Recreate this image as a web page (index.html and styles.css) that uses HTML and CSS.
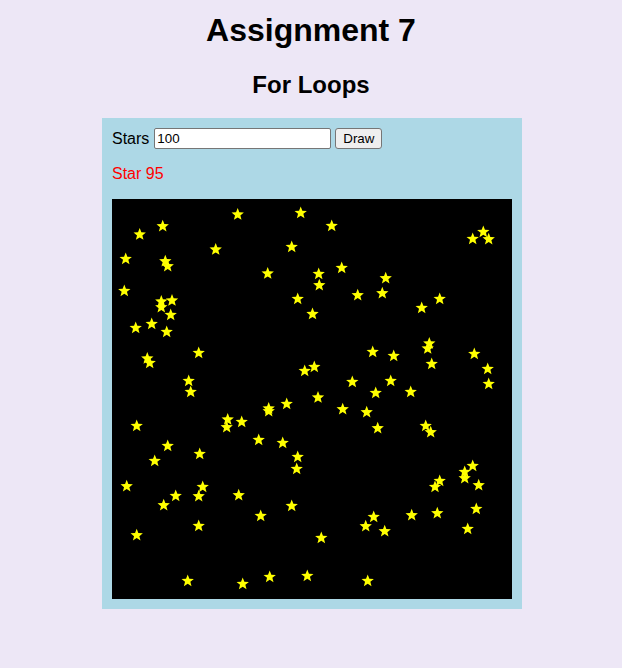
FILE: index.html
```html
<!DOCTYPE html>
<html lang="en">
<head>
<meta charset="utf-8">
<title>Assignment 7</title>
<link rel="stylesheet" href="styles.css">
</head>
<body>
<h1 class="title">Assignment 7</h1>
<h2 class="subtitle">For Loops</h2>
<main class="panel">
  <div class="controls">
    <label class="label" for="count">Stars</label>
    <input class="field" id="count" type="text" value="100">
    <button class="btn" type="button">Draw</button>
  </div>
  <p class="status">Star 95</p>
  <svg class="sky" width="400" height="400" viewBox="0 0 400 400" xmlns="http://www.w3.org/2000/svg">
    <defs>
      <polygon id="s" points="0,-6.5 1.65,-2.27 6.18,-2.01 2.66,0.87 3.82,5.26 0,2.8 -3.82,5.26 -2.66,0.87 -6.18,-2.01 -1.65,-2.27"/>
    </defs>
    <rect width="400" height="400" fill="#000"/>
    <g fill="#ffff00" transform="translate(0,0.6)">
      <use href="#s" x="125.7" y="15"/>
      <use href="#s" x="188.7" y="13.3"/>
      <use href="#s" x="50.7" y="26.7"/>
      <use href="#s" x="27.7" y="35"/>
      <use href="#s" x="219.7" y="26.3"/>
      <use href="#s" x="371.3" y="32.3"/>
      <use href="#s" x="360.7" y="39.3"/>
      <use href="#s" x="376.7" y="39.7"/>
      <use href="#s" x="103.7" y="50"/>
      <use href="#s" x="179.7" y="47.3"/>
      <use href="#s" x="13.7" y="59.3"/>
      <use href="#s" x="53.3" y="61.7"/>
      <use href="#s" x="55.7" y="66.7"/>
      <use href="#s" x="229.7" y="68.3"/>
      <use href="#s" x="155.7" y="74"/>
      <use href="#s" x="206.7" y="74.3"/>
      <use href="#s" x="273.7" y="78.7"/>
      <use href="#s" x="207.3" y="85.7"/>
      <use href="#s" x="12.3" y="91.3"/>
      <use href="#s" x="245.7" y="95.7"/>
      <use href="#s" x="270.3" y="93.7"/>
      <use href="#s" x="185.7" y="99.3"/>
      <use href="#s" x="49.3" y="102"/>
      <use href="#s" x="60" y="101"/>
      <use href="#s" x="49.3" y="107.7"/>
      <use href="#s" x="58.7" y="115.3"/>
      <use href="#s" x="327.7" y="99.3"/>
      <use href="#s" x="309.7" y="108.3"/>
      <use href="#s" x="200.5" y="114.5"/>
      <use href="#s" x="39.7" y="124.3"/>
      <use href="#s" x="23.7" y="128.3"/>
      <use href="#s" x="54.7" y="132.3"/>
      <use href="#s" x="317.3" y="144"/>
      <use href="#s" x="315.7" y="149"/>
      <use href="#s" x="260.7" y="152.3"/>
      <use href="#s" x="281.7" y="156.3"/>
      <use href="#s" x="362.3" y="154.3"/>
      <use href="#s" x="86.7" y="153.3"/>
      <use href="#s" x="35.3" y="159"/>
      <use href="#s" x="37.7" y="163.3"/>
      <use href="#s" x="319.7" y="164.3"/>
      <use href="#s" x="375.7" y="169.3"/>
      <use href="#s" x="202.3" y="167.3"/>
      <use href="#s" x="192.7" y="171.3"/>
      <use href="#s" x="240.3" y="182.3"/>
      <use href="#s" x="278.7" y="181.3"/>
      <use href="#s" x="76.7" y="181.3"/>
      <use href="#s" x="376.7" y="184.3"/>
      <use href="#s" x="78.7" y="192.3"/>
      <use href="#s" x="263.7" y="193.3"/>
      <use href="#s" x="298.7" y="192.3"/>
      <use href="#s" x="206" y="198"/>
      <use href="#s" x="174.7" y="204.3"/>
      <use href="#s" x="230.7" y="209.7"/>
      <use href="#s" x="254.7" y="212.7"/>
      <use href="#s" x="156.7" y="209"/>
      <use href="#s" x="156.7" y="211.7"/>
      <use href="#s" x="129.7" y="222.3"/>
      <use href="#s" x="115.7" y="220"/>
      <use href="#s" x="114.7" y="227.7"/>
      <use href="#s" x="24.7" y="226.3"/>
      <use href="#s" x="265.7" y="228.7"/>
      <use href="#s" x="313.7" y="226.3"/>
      <use href="#s" x="318.7" y="232.7"/>
      <use href="#s" x="146.7" y="240.3"/>
      <use href="#s" x="170.7" y="243.3"/>
      <use href="#s" x="55.7" y="246.3"/>
      <use href="#s" x="87.7" y="254.3"/>
      <use href="#s" x="185.7" y="257.3"/>
      <use href="#s" x="42.7" y="261.3"/>
      <use href="#s" x="184.7" y="269.3"/>
      <use href="#s" x="360.7" y="266.3"/>
      <use href="#s" x="352.7" y="272.3"/>
      <use href="#s" x="352.7" y="278.7"/>
      <use href="#s" x="327.7" y="281.3"/>
      <use href="#s" x="323" y="287.3"/>
      <use href="#s" x="366.7" y="285.7"/>
      <use href="#s" x="14.7" y="286.7"/>
      <use href="#s" x="90.7" y="287.3"/>
      <use href="#s" x="86.7" y="296.7"/>
      <use href="#s" x="63.7" y="296.3"/>
      <use href="#s" x="126.7" y="295.7"/>
      <use href="#s" x="51.7" y="305.7"/>
      <use href="#s" x="179.7" y="306.3"/>
      <use href="#s" x="364.3" y="309.3"/>
      <use href="#s" x="325.3" y="313.7"/>
      <use href="#s" x="299.7" y="315.7"/>
      <use href="#s" x="261.7" y="317.3"/>
      <use href="#s" x="148.7" y="316.3"/>
      <use href="#s" x="253.7" y="326.7"/>
      <use href="#s" x="272.7" y="331.7"/>
      <use href="#s" x="355.7" y="329.3"/>
      <use href="#s" x="86.7" y="326.3"/>
      <use href="#s" x="24.7" y="335.7"/>
      <use href="#s" x="209.3" y="338.3"/>
      <use href="#s" x="75.7" y="381.3"/>
      <use href="#s" x="130.7" y="384.3"/>
      <use href="#s" x="157.7" y="377.3"/>
      <use href="#s" x="195.3" y="376.3"/>
      <use href="#s" x="255.7" y="381.3"/>
    </g>
  </svg>
</main>
</body>
</html>
```

FILE: styles.css
```css
html, body {
  margin: 0;
  padding: 0;
}

body {
  background: #ede7f6;
  font-family: "Liberation Sans", Arial, sans-serif;
  font-size: 16px;
  color: #000;
  padding: 12px 8px 8px;
}

.title {
  font-size: 32px;
  font-weight: bold;
  text-align: center;
  margin: 0 0 22px;
  line-height: 37px;
}

.subtitle {
  font-size: 24px;
  font-weight: bold;
  text-align: center;
  margin: 0 0 19px;
  line-height: 28px;
}

.panel {
  display: block;
  width: 400px;
  margin: 0 auto;
  padding: 10px;
  background: #add8e6;
  position: relative;
  left: 1px;
}

.controls {
  display: flex;
  align-items: center;
  gap: 4px;
  height: 21px;
}

.label {
  font-size: 16px;
  line-height: 18px;
  margin-right: 1px;
}

.field {
  box-sizing: border-box;
  width: 177px;
  height: 21px;
  margin: 0;
  padding: 1px 2px;
  border: 1px solid #767676;
  border-radius: 2px;
  background: #fff;
  font-family: "Liberation Sans", Arial, sans-serif;
  font-size: 13.33px;
  color: #000;
}

.btn {
  box-sizing: border-box;
  width: 47px;
  height: 21px;
  margin: 0;
  padding: 1px 6px;
  border: 1px solid #767676;
  border-radius: 3px;
  background: #efefef;
  font-family: "Liberation Sans", Arial, sans-serif;
  font-size: 13.33px;
  color: #000;
}

.status {
  margin: 16px 0;
  color: #ff0000;
  font-size: 16px;
  line-height: 18px;
}

.sky {
  display: block;
  width: 400px;
  height: 400px;
}
```
